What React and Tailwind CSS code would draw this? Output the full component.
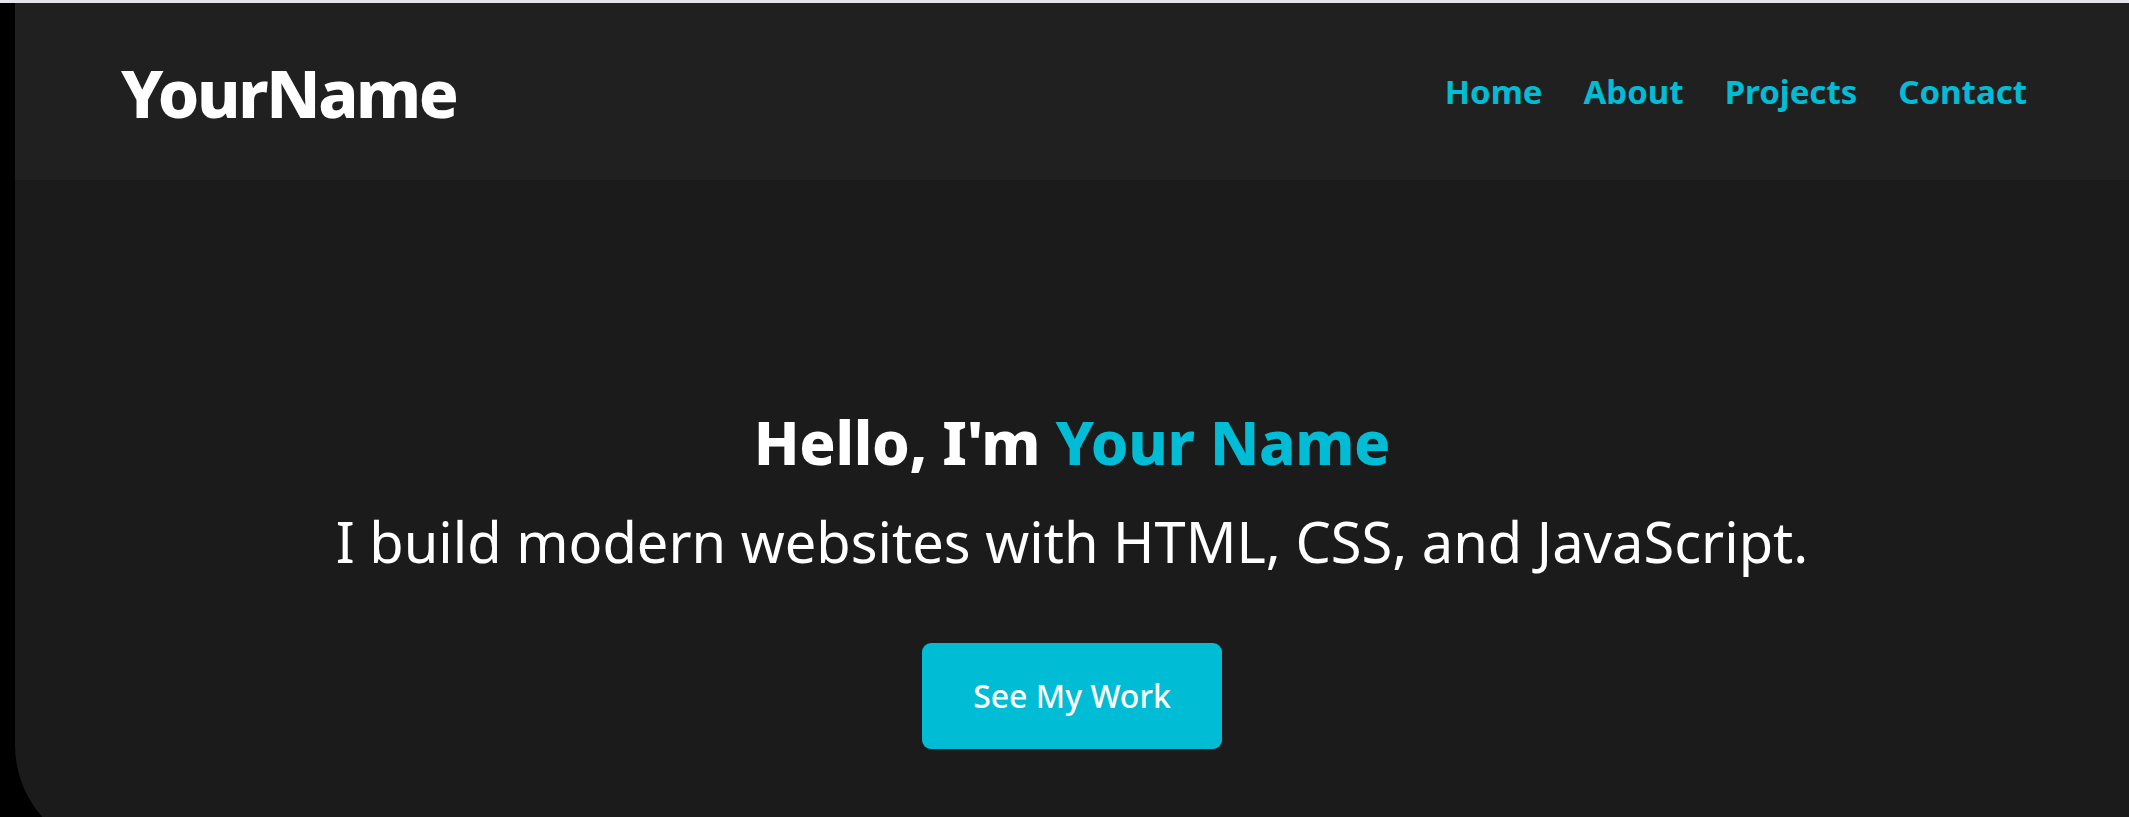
export default function App() {
  const links = ['Home', 'About', 'Projects', 'Contact']

  return (
    <div className="h-[817px] w-full overflow-hidden bg-black" style={{ fontFamily: '"Noto Sans", "Open Sans", sans-serif' }}>
      <div className="h-[3px] w-full bg-[#e4e4ec]" />
      <div className="ml-[15px] h-[851px] rounded-bl-[109px] bg-[#1b1b1b]">
        <header className="flex h-[177px] items-center justify-between bg-[#202020] pl-[106px] pr-[102px]">
          <h1 className="text-[66px] font-extrabold leading-none tracking-[-0.035em] text-white">YourName</h1>
          <nav className="flex items-center gap-[41px]">
            {links.map((link) => (
              <a key={link} href="#" className="text-[33px] font-bold leading-none text-[#00bcd4]">
                {link}
              </a>
            ))}
          </nav>
        </header>

        <section className="flex flex-col items-center pt-[232px] text-center">
          <h2 className="text-[60px] font-extrabold leading-[60px] tracking-[-0.005em] text-white">
            Hello, I'm <span className="text-[#00bcd4]">Your Name</span>
          </h2>
          <p className="mt-[41px] text-[56px] leading-[56px] text-white">
            I build modern websites with HTML, CSS, and JavaScript.
          </p>
          <button className="mt-[74px] h-[106px] w-[300px] rounded-[9px] bg-[#00bcd4] text-[32px] font-medium text-white">
            See My Work
          </button>
        </section>
      </div>
    </div>
  )
}
